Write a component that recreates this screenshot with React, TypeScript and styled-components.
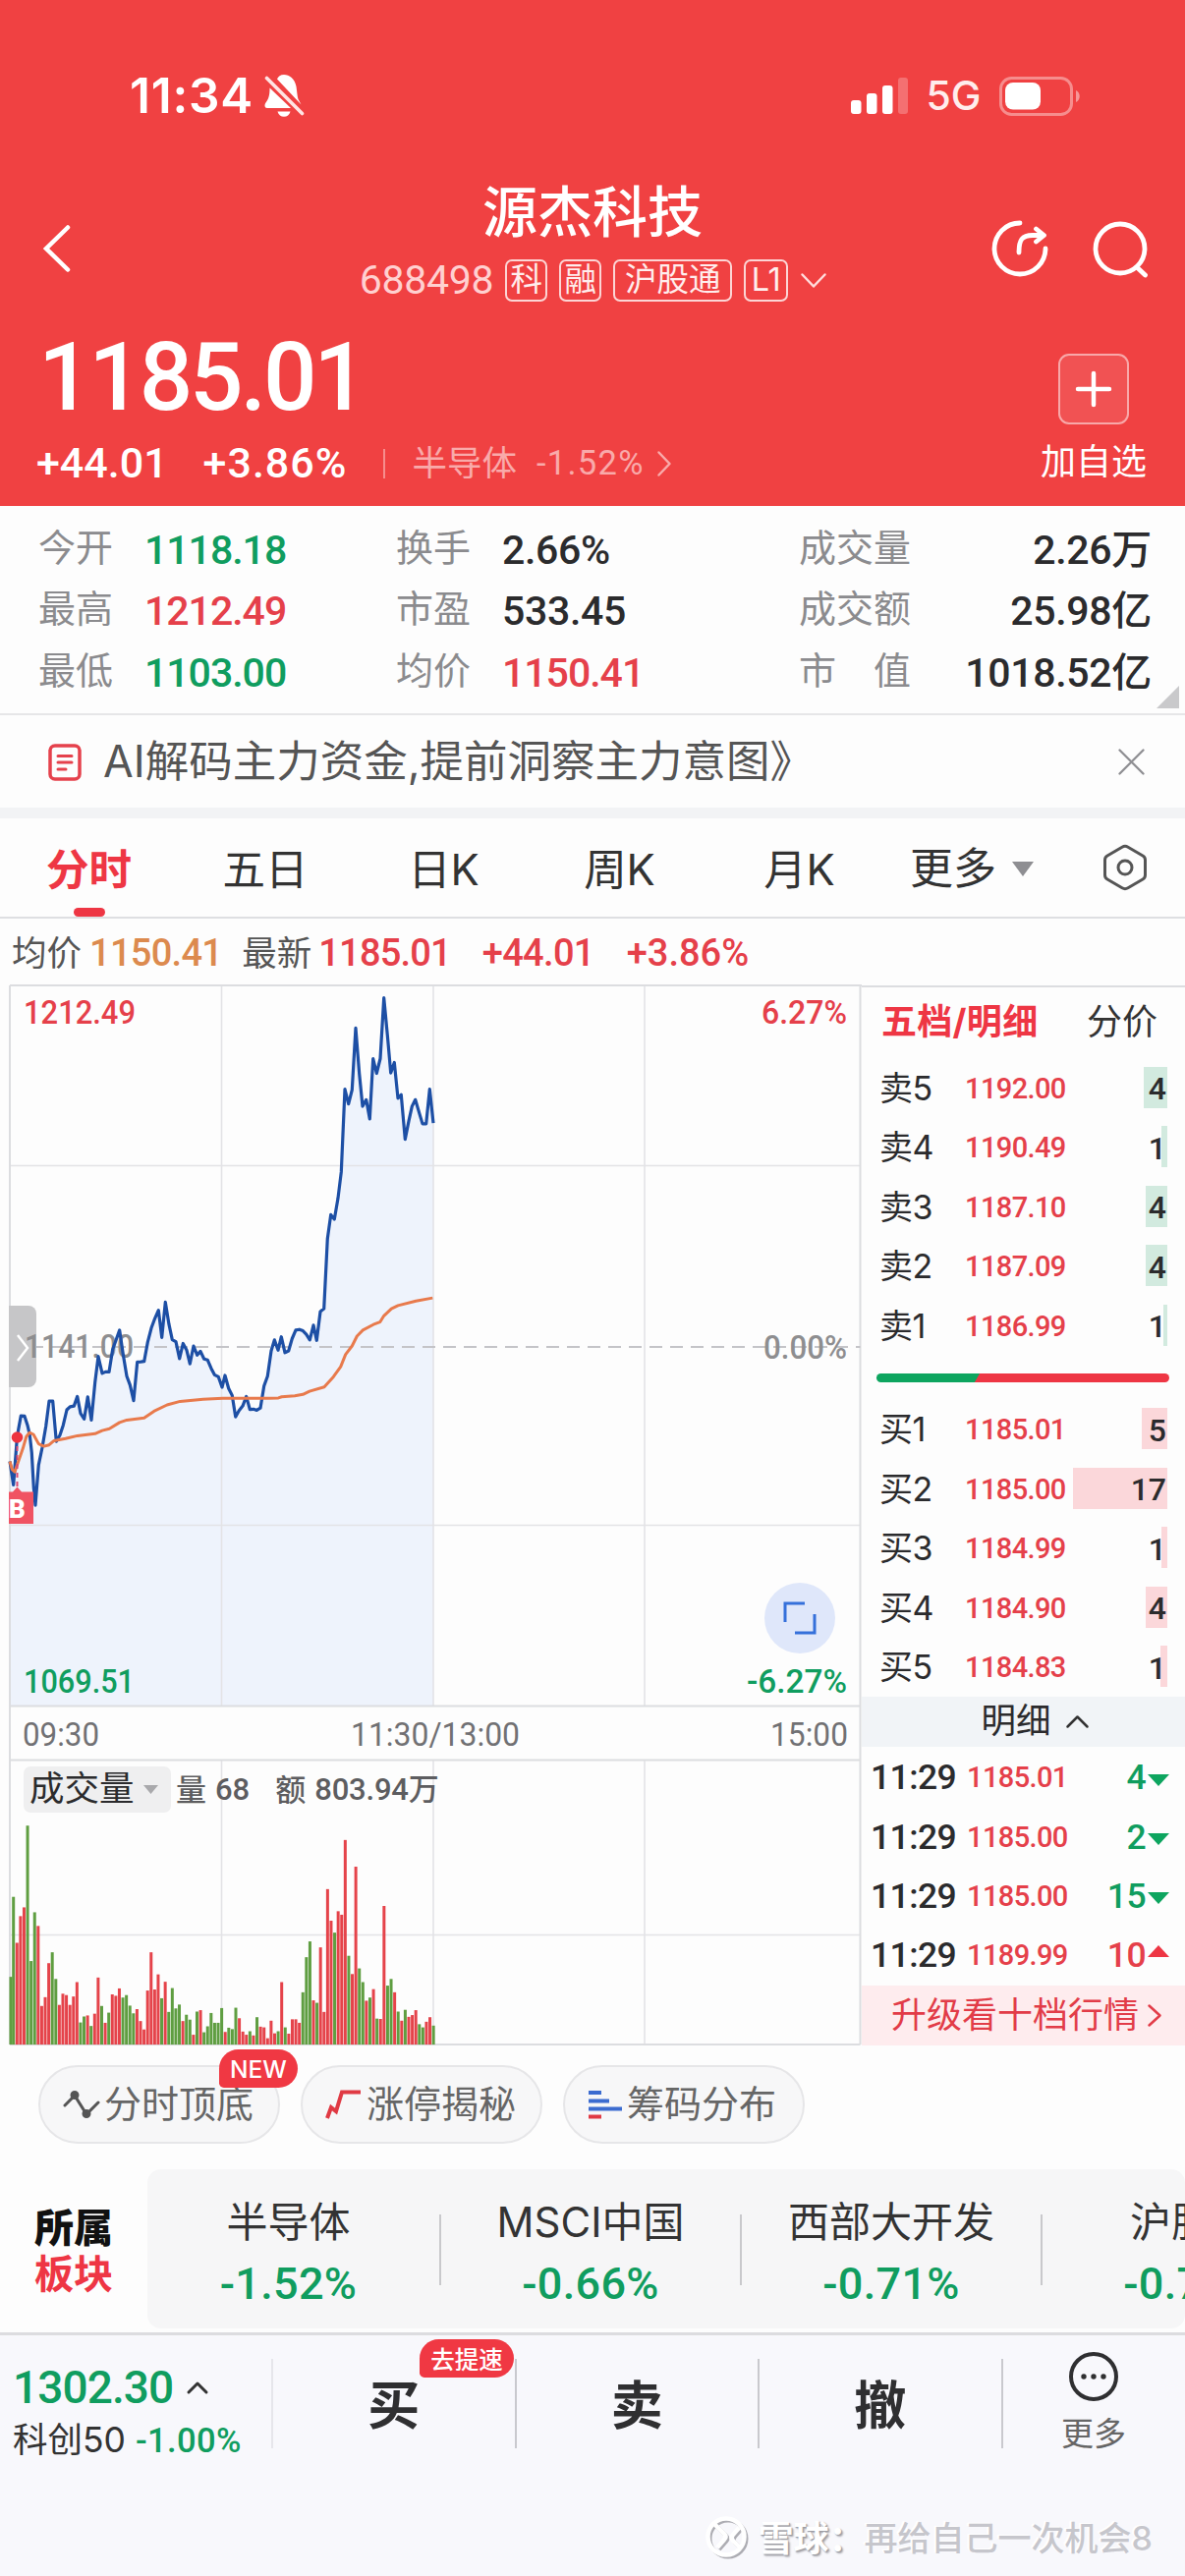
import React from 'react';
import styled, { createGlobalStyle } from 'styled-components';

const RED = '#e5404a';
const GREEN = '#109d5f';
const INK = '#2b2b2d';
const LINE = '#dcdde0';

const CJK = `Inter, 'Noto Sans CJK SC', sans-serif`;
const NUM = `Roboto, 'Noto Sans CJK SC', sans-serif`;

const GlobalStyle = createGlobalStyle`
  * { box-sizing: border-box; }
  body { margin: 0; background: #fdfdfd; font-family: ${CJK}; white-space: nowrap; }
  svg { display: block; flex: none; }
`;

type TextProps = { $size: number; $color?: string; $weight?: number; $ls?: number };

const Text = styled.span<TextProps>`
  font-family: ${CJK};
  font-size: ${p => p.$size}px;
  line-height: 1.2;
  color: ${p => p.$color ?? INK};
  font-weight: ${p => p.$weight ?? 400};
  letter-spacing: ${p => p.$ls ?? 0}px;
`;

const Num = styled(Text)`
  font-family: ${NUM};
  font-weight: ${p => p.$weight ?? 500};
`;

const Page = styled.main`
  width: 1206px;
  height: 2622px;
  display: flex;
  flex-direction: column;
  overflow: hidden;
  background: #fdfdfd;
`;

/* ---------- header ---------- */

const Header = styled.header`
  height: 515px;
  background: #f04142;
  color: #fff;
  padding-top: 73px;
`;

const StatusBar = styled.div`
  height: 50px;
  padding: 0 105px 0 132px;
  display: flex;
  align-items: center;
  justify-content: space-between;
`;

const StatusGroup = styled.div<{ $gap: number }>`
  display: flex;
  align-items: center;
  gap: ${p => p.$gap}px;
`;

const NavBar = styled.nav`
  height: 145px;
  margin-top: 57px;
  display: grid;
  grid-template-columns: 260px 1fr 260px;
  align-items: center;
`;

const NavLeft = styled.div`
  padding-left: 43px;
`;

const NavRight = styled.div`
  display: flex;
  justify-content: flex-end;
  gap: 43px;
  padding-right: 36px;
`;

const NavCenter = styled.div`
  align-self: start;
  display: flex;
  flex-direction: column;
  align-items: center;
`;

const Title = styled.h1`
  margin: 0;
  font-size: 56px;
  line-height: 72px;
  font-weight: 500;
`;

const CodeRow = styled.div`
  height: 43px;
  margin-top: 12px;
  padding-left: 2px;
  display: flex;
  align-items: center;
  gap: 12px;
`;

const Chip = styled.span<{ $width: number }>`
  width: ${p => p.$width}px;
  height: 43px;
  border: 2px solid rgba(255, 255, 255, 0.78);
  border-radius: 7px;
  display: flex;
  align-items: center;
  justify-content: center;
  font-size: 32.5px;
  line-height: 1;
  color: #ffeded;
`;

const Quote = styled.section`
  display: flex;
  justify-content: space-between;
  padding: 11px 40px 0 37px;
`;

const QuoteMain = styled.div`
  display: flex;
  flex-direction: column;
`;

const Price = styled.div`
  font-family: ${NUM};
  font-size: 96px;
  line-height: 96px;
  font-weight: 500;
  letter-spacing: -3.2px;
  padding-left: 2px;
`;

const ChangeRow = styled.div`
  height: 50px;
  margin-top: 15px;
  display: flex;
  align-items: center;
`;

const Gap = styled.i<{ $w: number }>`
  flex: none;
  width: ${p => p.$w}px;
`;

const ThinBar = styled.i`
  width: 2px;
  height: 30px;
  background: rgba(255, 255, 255, 0.4);
`;

const AddBox = styled.div`
  width: 106px;
  display: flex;
  flex-direction: column;
  align-items: center;
  padding-top: 24px;
`;

const AddButton = styled.button`
  width: 72px;
  height: 72px;
  padding: 0;
  border: 2px solid rgba(255, 255, 255, 0.5);
  border-radius: 11px;
  background: rgba(255, 255, 255, 0.09);
  display: flex;
  align-items: center;
  justify-content: center;
  margin-bottom: 17px;
`;

/* ---------- stats ---------- */

const Stats = styled.section`
  height: 213px;
  padding: 14px 34px 0 39px;
  border-bottom: 2px solid #e6e6e8;
  display: grid;
  grid-template-columns: 364px 410px 1fr;
  position: relative;
`;

const StatRow = styled.div<{ $label: number; $end?: boolean }>`
  height: 62.7px;
  display: grid;
  grid-template-columns: ${p => p.$label}px 1fr;
  align-items: center;
  justify-items: ${p => (p.$end ? 'end' : 'start')};
  & > :first-child { justify-self: start; padding-bottom: 6px; }
`;

const Corner = styled.i`
  position: absolute;
  right: 6px;
  bottom: 5px;
  border-style: solid;
  border-width: 0 0 23px 23px;
  border-color: transparent transparent #c9c9cb transparent;
`;

const Notice = styled.section`
  height: 94px;
  padding: 1px 41px 0 49px;
  display: flex;
  align-items: center;
  gap: 22px;
`;

const Grow = styled.div`
  flex: 1;
`;

const Strip = styled.div`
  height: 11px;
  background: #f2f3f5;
`;

/* ---------- tabs ---------- */

const Tabs = styled.nav`
  height: 102px;
  border-bottom: 2px solid #dedfe2;
  padding: 0 38px 0 0;
  display: flex;
`;

const Tab = styled.div<{ $active?: boolean; $w: number }>`
  width: ${p => p.$w}px;
  height: 100px;
  padding-top: 25px;
  display: flex;
  flex-direction: column;
  align-items: center;
  justify-content: space-between;
  font-size: 43.5px;
  line-height: 54px;
  font-weight: ${p => (p.$active ? 700 : 400)};
  color: ${p => (p.$active ? '#ee3644' : '#333')};
  &::after {
    content: '';
    width: 32px;
    height: 9px;
    border-radius: 5px;
    background: ${p => (p.$active ? '#ee3644' : 'transparent')};
  }
`;

const MoreTab = styled.div`
  flex: 1;
  padding: 2px 0 0 16px;
  display: flex;
  align-items: center;
  gap: 16px;
`;

const SettingsTab = styled.div`
  display: flex;
  align-items: center;
`;

const Legend = styled.div`
  height: 68px;
  padding: 4px 0 0 12px;
  display: flex;
  align-items: center;
`;

/* ---------- chart and order book ---------- */

const Board = styled.section`
  height: 1079px;
  display: grid;
  grid-template-columns: 877px 1fr;
`;

const ChartPane = styled.div`
  position: relative;
`;

const IndicatorBar = styled.div`
  position: absolute;
  left: 24px;
  top: 795px;
  height: 47px;
  display: flex;
  align-items: center;
`;

const IndicatorSelect = styled.div`
  width: 150px;
  height: 47px;
  margin-right: 5px;
  padding-left: 6px;
  border-radius: 7px;
  background: #efeff0;
  display: flex;
  align-items: center;
  gap: 9px;
`;

const ExpandButton = styled.button`
  position: absolute;
  left: 778px;
  top: 608px;
  width: 72px;
  height: 72px;
  border: 0;
  padding: 0;
  border-radius: 50%;
  background: #dfe7fa;
  display: flex;
  align-items: center;
  justify-content: center;
`;

const Book = styled.aside`
  border-top: 2px solid ${LINE};
  display: flex;
  flex-direction: column;
`;

const BookTabs = styled.div`
  height: 71.5px;
  padding: 0 28px 0 20px;
  display: flex;
  align-items: center;
  justify-content: space-between;
`;

const LevelRow = styled.div`
  height: 60.5px;
  padding: 0 18px 0 18px;
  display: grid;
  grid-template-columns: 87px 1fr 100px;
  align-items: center;
  & span { padding-top: 3px; }
`;

const Depth = styled.div<{ $w: number; $buy?: boolean }>`
  height: 42px;
  display: flex;
  align-items: center;
  justify-content: flex-end;
  padding-right: 1px;
  background: linear-gradient(${p => (p.$buy ? '#fbd7da, #fbd7da' : '#d2eadf, #d2eadf')}) right / ${p => p.$w}px 100% no-repeat;
`;

const Ratio = styled.div`
  height: 9px;
  margin: 18.5px 16px 17.5px 15px;
  border-radius: 5px;
  background: linear-gradient(120deg, #0da55f 0 34.5%, #ee3644 34.8% 100%);
`;

const DetailBar = styled.div`
  height: 51px;
  margin-bottom: 2px;
  padding-left: 24px;
  background: #f1f4f7;
  display: flex;
  align-items: center;
  justify-content: center;
  gap: 14px;
`;

const TradeRow = styled.div<{ $up: boolean }>`
  height: 60.3px;
  padding: 0 16px 0 9px;
  display: grid;
  grid-template-columns: 98px 1fr auto 24px;
  align-items: center;
  justify-items: start;
  & > svg { justify-self: end; margin: ${p => (p.$up ? '0 0 10px' : '4px 0 0')}; }
`;

const Upgrade = styled.div`
  flex: 1;
  background: #feecee;
  padding-left: 30px;
  display: flex;
  align-items: center;
  gap: 8px;
`;

/* ---------- tools, sectors, bottom bar ---------- */

const Tools = styled.section`
  height: 126px;
  padding: 20px 39px 0;
  display: flex;
  gap: 21px;
`;

const Pill = styled.div`
  position: relative;
  width: 246px;
  height: 80px;
  border: 2px solid #e6e6e8;
  border-radius: 40px;
  background: #f7f7f8;
  display: flex;
  align-items: center;
  padding-left: 23px;
  gap: 4px;
`;

const Badge = styled.span<{ $left: number; $top: number; $w: number }>`
  position: absolute;
  left: ${p => p.$left}px;
  top: ${p => p.$top}px;
  width: ${p => p.$w}px;
  height: 39px;
  border-radius: 20px 20px 20px 5px;
  background: #f03843;
  color: #fff;
  font-size: 24.5px;
  font-weight: 500;
  display: flex;
  align-items: center;
  justify-content: center;
`;

const Sectors = styled.section`
  height: 166px;
  display: flex;
`;

const SectorTitle = styled.div`
  width: 150px;
  padding: 36px 0 0 35px;
  display: flex;
  flex-direction: column;
  font-size: 40px;
  line-height: 47px;
  font-weight: 900;
  color: #111;
  & > em { font-style: normal; color: #ee3644; font-weight: 700; }
`;

const SectorList = styled.div`
  flex: 1;
  height: 162px;
  border-radius: 14px;
  background: #f6f6f7;
  display: flex;
  overflow: hidden;
`;

const Sector = styled.div`
  flex: none;
  width: 306px;
  height: 162px;
  padding: 29px 2px 0 0;
  display: flex;
  flex-direction: column;
  align-items: center;
  gap: 11px;
  background: linear-gradient(#c9c9cc, #c9c9cc) right 46px / 2px 72px no-repeat;
  &:first-child { width: 299px; padding-right: 12px; }
`;

const BottomBar = styled.footer`
  flex: 1;
  border-top: 3px solid #dcdcdf;
  background: #f8f8fc;
  display: flex;
  flex-direction: column;
  justify-content: space-between;
`;

const Actions = styled.div`
  display: flex;
  padding-top: 24px;
`;

const IndexBox = styled.div`
  width: 276px;
  padding: 2px 0 0 13px;
  display: flex;
  flex-direction: column;
  gap: 5px;
`;

const IndexRow = styled.div<{ $gap: number }>`
  display: flex;
  align-items: center;
  gap: ${p => p.$gap}px;
`;

const Action = styled.div<{ $faint?: boolean }>`
  position: relative;
  width: 247.5px;
  height: 91px;
  padding-bottom: 3px;
  border-left: 2px solid ${p => (p.$faint ? '#e6e6eb' : '#c9c9ce')};
  display: flex;
  align-items: center;
  justify-content: center;
  font-size: 53px;
  font-weight: 700;
  color: #2f2f31;
`;

const More = styled.div`
  width: 187px;
  height: 91px;
  border-left: 2px solid #c9c9ce;
  display: flex;
  flex-direction: column;
  align-items: center;
  gap: 14px;
  & > svg { margin-top: -7px; }
`;

const Watermark = styled.div`
  display: flex;
  align-items: center;
  padding: 0 33px 15px 0;
  justify-content: flex-end;
`;

const Brand = styled.span`
  font-size: 36px;
  line-height: 44px;
  font-weight: 700;
  color: #fff;
  margin-left: 8px;
  width: 108px;
  text-shadow: 1px 1px 1px #9c9ca2, 2px 2px 2px #a8a8ae;
`;

const Author = styled.span`
  font-size: 34px;
  line-height: 44px;
  font-weight: 500;
  color: #c6c6cc;
  text-shadow: -2px -1px 1px #fff;
`;

/* ---------- icons ---------- */

const BellOff = () => (
  <svg width="42" height="46" viewBox="0 0 42 46">
    <path d="M14 5.500C15 3 17.500 1 21 1c5.500 0 11 4 12.500 12 .8 5 1 10 2 13l3 5.500z" fill="#fff" />
    <path d="M6.500 14.500C6.500 22 5.500 25.500 2.500 29.500 1 31.500 1 35 4 35h24z" fill="#fff" />
    <path d="M14.500 38.500h13c-.8 3.500-3.500 5.200-6.500 5.200s-5.700-1.700-6.500-5.200z" fill="#fff" />
    <path d="M3.500 4.500l36 36" stroke="#f04142" strokeWidth="7" />
    <path d="M3.500 4.500l36 36" stroke="#ffe4e4" strokeWidth="3.600" strokeLinecap="round" />
  </svg>
);

const Signal = () => (
  <svg width="58" height="40" viewBox="0 0 58 40" fill="#fff">
    <rect x="0" y="24" width="10.500" height="14" rx="3" />
    <rect x="16" y="17" width="10.500" height="21" rx="3" />
    <rect x="32" y="9" width="10.500" height="29" rx="3" />
    <rect x="48" y="1" width="10" height="37" rx="3" opacity="0.250" />
  </svg>
);

const Battery = () => (
  <svg width="84" height="40" viewBox="0 0 84 40">
    <rect x="1.500" y="1.500" width="72" height="37" rx="11" fill="none" stroke="#fff" strokeOpacity="0.400" strokeWidth="3" />
    <rect x="6" y="6" width="36" height="27.500" rx="8" fill="#fff" />
    <path d="M78 14c5 2 5 10 0 12z" fill="#fff" opacity="0.450" />
  </svg>
);

const BackIcon = () => (
  <svg width="30" height="52" viewBox="0 0 30 52" fill="none" stroke="#fff" strokeWidth="4.500" strokeLinecap="round">
    <path d="M26 4.500L4 26l22 21.500" />
  </svg>
);

const ShareIcon = () => (
  <svg width="60" height="60" viewBox="0 0 60 60" fill="none" stroke="#fff" strokeWidth="4.800" strokeLinecap="round" strokeLinejoin="round">
    <path d="M31 4A26 26 0 1 0 57 30" />
    <path d="M30 34c0-13 3-17.500 14-17.500h9M47.500 10l8 6.500-8 6.500" />
  </svg>
);

const SearchIcon = () => (
  <svg width="60" height="60" viewBox="0 0 60 60" fill="none" stroke="#fff" strokeWidth="4.800" strokeLinecap="round">
    <circle cx="30" cy="30" r="25" />
    <path d="M47 49l8.500 8" />
  </svg>
);

const Chevron = ({ w, h, dir, color, stroke = 2.5 }: { w: number; h: number; dir: 'up' | 'down' | 'right'; color: string; stroke?: number }) => {
  const p = stroke;
  const d = {
    up: `M${p} ${h - p}L${w / 2} ${p}L${w - p} ${h - p}`,
    down: `M${p} ${p}L${w / 2} ${h - p}L${w - p} ${p}`,
    right: `M${p} ${p}L${w - p} ${h / 2}L${p} ${h - p}`,
  }[dir];
  return (
    <svg width={w} height={h} fill="none" stroke={color} strokeWidth={stroke} strokeLinecap="round" strokeLinejoin="round">
      <path d={d} />
    </svg>
  );
};

const Caret = ({ w, h, color, up }: { w: number; h: number; color: string; up?: boolean }) => (
  <svg width={w} height={h} fill={color}>
    <path d={up ? `M0 ${h}L${w / 2} 0L${w} ${h}z` : `M0 0L${w / 2} ${h}L${w} 0z`} />
  </svg>
);

const NoticeIcon = () => (
  <svg width="34" height="38" viewBox="0 0 34 38" fill="none" stroke="#e5414c" strokeLinecap="round">
    <rect x="2" y="2" width="30" height="34" rx="5" strokeWidth="3.500" />
    <path d="M10 12.500h14M10 19h14M10 26h8" strokeWidth="3" />
  </svg>
);

const CloseIcon = () => (
  <svg width="27" height="27" viewBox="0 0 27 27" stroke="#8f8f93" strokeWidth="2.300" strokeLinecap="round">
    <path d="M1.500 1.500l24 24M25.500 1.500l-24 24" />
  </svg>
);

const HexIcon = () => (
  <svg width="46" height="48" viewBox="0 0 46 48" fill="none" stroke="#555" strokeWidth="3" strokeLinejoin="round">
    <path d="M20 3.200a6 6 0 0 1 6 0l15 8.800a5 5 0 0 1 2.500 4.300v15.400a5 5 0 0 1-2.500 4.300l-15 8.800a6 6 0 0 1-6 0l-15-8.800a5 5 0 0 1-2.500-4.300V16.300A5 5 0 0 1 5 12z" />
    <circle cx="23" cy="24" r="7" />
  </svg>
);

const ExpandIcon = () => (
  <svg width="34" height="34" viewBox="0 0 34 34" fill="none" stroke="#3570da" strokeWidth="3">
    <path d="M22 2H2v19M12 32h20V13" />
  </svg>
);

const TopBottomIcon = () => (
  <svg width="38" height="32" viewBox="0 0 38 32" stroke="#555" strokeWidth="3" fill="none" strokeLinecap="round">
    <path d="M2 17L12 7l12 19L36 14" />
    <circle cx="12" cy="6.500" r="3" fill="#555" />
    <circle cx="24" cy="25.500" r="3" fill="#555" />
  </svg>
);

const LimitIcon = () => (
  <svg width="38" height="32" viewBox="0 0 38 32" stroke="#e03a44" strokeWidth="4" fill="none">
    <path d="M2 30l4-11 5 4 6-19.500h19" />
  </svg>
);

const ChipsIcon = () => (
  <svg width="36" height="32" viewBox="0 0 36 32" strokeWidth="4">
    <path d="M1 4h13M1 12.500h21M1 20.500h34" stroke="#3c6cd0" />
    <path d="M1 28.500h13" stroke="#e03a44" />
  </svg>
);

const DotsIcon = () => (
  <svg width="50" height="50" viewBox="0 0 50 50">
    <circle cx="25" cy="25" r="23" fill="none" stroke="#2f2f31" strokeWidth="4" />
    <circle cx="15" cy="25" r="2.700" fill="#2f2f31" />
    <circle cx="25" cy="25" r="2.700" fill="#2f2f31" />
    <circle cx="35" cy="25" r="2.700" fill="#2f2f31" />
  </svg>
);

const BrandMark = () => (
  <svg width="46" height="46" viewBox="0 0 46 46" fill="none">
    <g transform="translate(2 2)" stroke="#adadb3" strokeWidth="4">
      <circle cx="21" cy="21" r="18.500" />
      <path d="M9 8l10 10c2 2 2 4 0 6l-7 8M34 12l-6 7c-2 2-2 4 0 6l7 7" />
    </g>
    <g stroke="#fff" strokeWidth="4.500">
      <circle cx="21" cy="21" r="18.500" />
      <path d="M9 8l10 10c2 2 2 4 0 6l-7 8M34 12l-6 7c-2 2-2 4 0 6l7 7" />
    </g>
  </svg>
);

/* ---------- intraday chart ---------- */

const TRACE_X = 3;
const TRACE_Y = 2.8;

const PRICE: number[][] = [
  [30, 1365], [41, 1432], [52, 1300], [57, 1270], [64, 1235], [75, 1236], [84, 1262], [91, 1290], [97, 1340], [103, 1440], [108, 1490],
  [118, 1375], [129, 1325], [140, 1265], [150, 1193], [161, 1193], [172, 1308], [183, 1290], [193, 1262], [204, 1218], [214, 1209],
  [226, 1207], [236, 1180], [246, 1228], [257, 1244], [268, 1181], [279, 1247], [290, 1140], [300, 1066], [312, 1114], [322, 1110],
  [333, 1110], [344, 1045], [354, 1020], [365, 991], [376, 1060], [387, 1122], [397, 1147], [408, 1192], [419, 1082], [430, 1081],
  [440, 1080], [451, 1025], [462, 985], [473, 957], [484, 934], [494, 1012], [505, 911], [516, 975], [526, 1018], [537, 1024],
  [548, 1072], [559, 1029], [570, 1048], [580, 1087], [591, 1036], [602, 1062], [612, 1051], [623, 1073], [634, 1076], [645, 1100],
  [655, 1118], [667, 1124], [678, 1154], [687, 1120], [698, 1157], [709, 1177], [719, 1238], [730, 1220], [741, 1207], [752, 1180],
  [763, 1217], [774, 1216], [784, 1219], [795, 1213], [806, 1150], [817, 1122], [828, 1050], [838, 1019], [849, 1048], [859, 1010],
  [870, 1055], [881, 1050], [892, 1015], [903, 991], [914, 989], [925, 993], [935, 1003], [946, 1019], [957, 977], [967, 1020],
  [978, 938], [989, 930], [1000, 730], [1010, 662], [1021, 675], [1032, 615], [1042, 540], [1053, 304], [1064, 346], [1075, 306],
  [1086, 130], [1097, 260], [1107, 353], [1118, 334], [1129, 389], [1139, 217], [1150, 259], [1161, 217], [1172, 44], [1183, 150],
  [1193, 258], [1204, 228], [1215, 330], [1225, 320], [1237, 447], [1248, 395], [1258, 353], [1268, 334], [1280, 372], [1290, 403],
  [1301, 403], [1312, 304], [1323, 401],
];

const AVERAGE: number[][] = [
  [30, 1365], [37, 1388], [45, 1395], [56, 1365], [70, 1328], [80, 1295], [90, 1283], [102, 1288], [118, 1315], [134, 1322], [150, 1318],
  [165, 1306], [200, 1300], [236, 1292], [290, 1286], [312, 1277], [334, 1272], [365, 1254], [387, 1247], [440, 1241], [470, 1222],
  [510, 1204], [550, 1194], [620, 1188], [680, 1185], [820, 1185], [850, 1184], [860, 1181], [900, 1178], [925, 1174], [945, 1165],
  [990, 1153], [1018, 1124], [1040, 1095], [1055, 1060], [1075, 1036], [1090, 1008], [1108, 991], [1140, 975], [1160, 968],
  [1172, 950], [1195, 930], [1215, 921], [1270, 908], [1321, 899],
];

const VOLUME_BASE = 1515;
const VOLUME =
  'G1322 G1094 R1225 R1149 R1124 G891 G1277 G1138 R1177 R1405 R1380 R1283 G1252 G1328 R1402 R1370 R1374 R1402 R1378 R1337 ' +
  'G1452 G1435 R1432 G1462 R1427 R1324 G1405 R1453 G1424 R1372 R1376 R1355 G1381 G1374 G1404 G1426 R1414 R1448 R1472 R1361 ' +
  'R1252 R1358 R1315 G1383 R1336 G1422 G1354 G1412 G1401 R1448 G1430 G1444 R1487 G1421 R1417 G1480 G1463 G1425 G1453 G1453 ' +
  'G1411 R1479 G1467 G1471 G1410 R1440 R1478 R1487 G1477 R1489 G1437 R1464 R1466 R1497 R1447 R1483 G1477 R1337 G1466 R1484 ' +
  'R1443 R1443 R1453 G1366 G1266 G1221 R1389 G1396 R1238 R1422 R1072 R1162 G1196 R1135 R1145 R932 G1262 R1314 R1008 G1298 ' +
  'G1337 R1390 G1381 R1357 G1441 R1442 R1120 G1347 G1328 R1366 G1421 R1447 G1416 R1436 R1431 R1417 G1457 G1466 R1450 R1437 G1461';

const toPoints = (pts: number[][]) => pts.map(([x, y]) => `${(x / TRACE_X).toFixed(1)},${(y / TRACE_Y).toFixed(1)}`).join(' ');

const AXIS = { left: 10, right: 875.5, top: 3, zero: 371, priceBottom: 736.5, volTop: 791.5, bottom: 1081 };

const ChartSvg = styled.svg`
  margin-top: -2px;
  font-family: ${NUM};
  font-size: 32.5px;
  font-weight: 500;
`;

const AxisText = ({ x, y, w, color, children }: { x: number; y: number; w: number; color: string; children: string }) => (
  <text x={x} y={y} textLength={w} fill={color} lengthAdjust="spacingAndGlyphs">{children}</text>
);

const IntradayChart = () => {
  const line = toPoints(PRICE);
  const area = `${line} 441,${AXIS.priceBottom} ${AXIS.left},${AXIS.priceBottom}`;
  return (
    <ChartSvg width="877" height="1081" viewBox="0 1 877 1081">
      <polygon points={area} fill="#eef3fc" />
      <g stroke="#e3e3e6" strokeWidth="1.600">
        <path d={`M${AXIS.left} 186.500H${AXIS.right}M${AXIS.left} 552.500H${AXIS.right}M${AXIS.left} 969.500H${AXIS.right}`} />
        {[225.5, 441, 656].map(x => (
          <path key={x} d={`M${x} ${AXIS.top}V${AXIS.priceBottom}M${x} ${AXIS.volTop}V${AXIS.bottom}`} />
        ))}
      </g>
      <g stroke={LINE} strokeWidth="2">
        <path d={`M${AXIS.left} ${AXIS.top}H877M${AXIS.left} ${AXIS.priceBottom}H${AXIS.right}M${AXIS.left} ${AXIS.volTop}H${AXIS.right}M${AXIS.left} ${AXIS.bottom}H${AXIS.right}`} />
        <path d={`M${AXIS.left} ${AXIS.top}V${AXIS.bottom}M${AXIS.right} ${AXIS.top}V${AXIS.bottom}`} />
      </g>
      <path d={`M${AXIS.left} ${AXIS.zero}H${AXIS.right}`} stroke="#c4c4c8" strokeWidth="1.800" strokeDasharray="13 8" />

      {VOLUME.split(' ').map((bar, i) => {
        const top = Number(bar.slice(1));
        const x = AXIS.left + i * 3.592 - (i === 0 ? 0.5 : 1.4);
        return (
          <rect
            key={i}
            x={x}
            y={540 + top / TRACE_Y}
            width="3"
            height={(VOLUME_BASE - top) / TRACE_Y}
            fill={bar[0] === 'R' ? '#e5434a' : '#5f9e41'}
          />
        );
      })}

      <path d="M9 329h20a8 8 0 0 1 8 8v67a8 8 0 0 1-8 8H9z" fill="#c6c6c8" />
      <path d="M18 359l10 13-10 13" fill="none" stroke="#fff" strokeWidth="2.500" />
      <AxisText x={25} y={382} w={111} color="#8e8e90">1141.00</AxisText>

      <polyline points={line} fill="none" stroke="#1d4fa5" strokeWidth="3.200" strokeLinejoin="round" />
      <polyline points={toPoints(AVERAGE)} fill="none" stroke="#e87a4c" strokeWidth="3" strokeLinejoin="round" />

      <path d="M17.500 463v52" stroke="#d94a70" strokeWidth="2" strokeDasharray="5 4" />
      <circle cx="17.500" cy="463" r="5.800" fill="#ee3440" />
      <path d="M9 518.500h4l4.500-5 4.500 5h12V551H9z" fill="#f05363" />
      <text x="9" y="544.500" fill="#fff" fontSize="26" fontWeight="900">B</text>

      <AxisText x={24} y={41.5} w={114} color={RED}>1212.49</AxisText>
      <AxisText x={775} y={41.5} w={87} color={RED}>6.27%</AxisText>
      <AxisText x={777} y={382.5} w={85} color="#8e8e90">0.00%</AxisText>
      <AxisText x={24} y={722.5} w={113} color={GREEN}>1069.51</AxisText>
      <AxisText x={760} y={722.5} w={102} color={GREEN}>-6.27%</AxisText>
      <g fontWeight="400">
        <AxisText x={23} y={777} w={78} color="#717174">09:30</AxisText>
        <AxisText x={357} y={777} w={172} color="#717174">11:30/13:00</AxisText>
        <AxisText x={784} y={777} w={79} color="#717174">15:00</AxisText>
      </g>
    </ChartSvg>
  );
};

/* ---------- data ---------- */

const STATS = [
  [
    { label: '今开', value: '1118.18', color: GREEN },
    { label: '最高', value: '1212.49', color: RED },
    { label: '最低', value: '1103.00', color: GREEN },
  ],
  [
    { label: '换手', value: '2.66%', color: INK },
    { label: '市盈', value: '533.45', color: INK },
    { label: '均价', value: '1150.41', color: RED },
  ],
  [
    { label: '成交量', value: '2.26万', color: INK },
    { label: '成交额', value: '25.98亿', color: INK },
    { label: '市\u3000值', value: '1018.52亿', color: INK },
  ],
];

const SELL = [
  ['卖5', '1192.00', '4', 24],
  ['卖4', '1190.49', '1', 6],
  ['卖3', '1187.10', '4', 22],
  ['卖2', '1187.09', '4', 22],
  ['卖1', '1186.99', '1', 4],
] as const;

const BUY = [
  ['买1', '1185.01', '5', 26],
  ['买2', '1185.00', '17', 96],
  ['买3', '1184.99', '1', 6],
  ['买4', '1184.90', '4', 22],
  ['买5', '1184.83', '1', 7],
] as const;

const TRADES = [
  { price: '1185.01', qty: '4', up: false },
  { price: '1185.00', qty: '2', up: false },
  { price: '1185.00', qty: '15', up: false },
  { price: '1189.99', qty: '10', up: true },
];

const SECTORS = [
  ['半导体', '-1.52%'],
  ['MSCI中国', '-0.66%'],
  ['西部大开发', '-0.71%'],
  ['沪股通', '-0.71%'],
];

const Levels = ({ rows, buy }: { rows: readonly (readonly [string, string, string, number])[]; buy?: boolean }) => (
  <>
    {rows.map(([name, price, qty, w]) => (
      <LevelRow key={name}>
        <Text $size={34} $ls={-0.5}>{name}</Text>
        <Num $size={29} $color={RED} $ls={-0.6}>{price}</Num>
        <Depth $w={w} $buy={buy}>
          <Num $size={32}>{qty}</Num>
        </Depth>
      </LevelRow>
    ))}
  </>
);

export default function App() {
  return (
    <Page>
      <GlobalStyle />
      <Header>
        <StatusBar>
          <StatusGroup $gap={10}>
            <Text $size={49.5} $weight={600} $color="#fff" $ls={0.8}>11:34</Text>
            <BellOff />
          </StatusGroup>
          <StatusGroup $gap={19}>
            <Signal />
            <Text $size={41} $weight={500} $color="#ffeded" $ls={-0.3}>5G</Text>
            <Battery />
          </StatusGroup>
        </StatusBar>
        <NavBar>
          <NavLeft><BackIcon /></NavLeft>
          <NavCenter>
            <Title>源杰科技</Title>
            <CodeRow>
              <Num $size={41} $weight={400} $color="#ffd0d0" $ls={-0.3}>688498</Num>
              <Chip $width={43}>科</Chip>
              <Chip $width={43}>融</Chip>
              <Chip $width={121}>沪股通</Chip>
              <Chip $width={45}>L1</Chip>
              <Chevron w={28} h={17} dir="down" color="#ffdcdc" />
            </CodeRow>
          </NavCenter>
          <NavRight>
            <ShareIcon />
            <SearchIcon />
          </NavRight>
        </NavBar>
        <Quote>
          <QuoteMain>
            <Price>1185.01</Price>
            <ChangeRow>
              <Num $size={43} $color="#fff">+44.01</Num>
              <Gap $w={36} />
              <Num $size={43} $color="#fff" $ls={1}>+3.86%</Num>
              <Gap $w={37} />
              <ThinBar />
              <Gap $w={27} />
              <Text $size={35.5} $color="#f9aaaa">半导体</Text>
              <Gap $w={20} />
              <Num $size={34.5} $color="#f9aaaa" $weight={400} $ls={1.3}>-1.52%</Num>
              <Gap $w={12} />
              <Chevron w={16} h={28} dir="right" color="#f9aaaa" />
            </ChangeRow>
          </QuoteMain>
          <AddBox>
            <AddButton aria-label="加自选">
              <svg width="38" height="38" stroke="#fff" strokeWidth="4.500" strokeLinecap="round">
                <path d="M19 3v32M3 19h32" />
              </svg>
            </AddButton>
            <Text $size={36} $color="#fff">加自选</Text>
          </AddBox>
        </Quote>
      </Header>

      <Stats>
        {STATS.map((col, c) => (
          <div key={c}>
            {col.map(s => (
              <StatRow key={s.label} $label={c === 2 ? 130 : 108} $end={c === 2}>
                <Text $size={38} $color="#8b8b8e">{s.label}</Text>
                <Num $size={41} $color={s.color} $ls={s.value.length === 7 && c < 2 ? -1 : -0.3}>{s.value}</Num>
              </StatRow>
            ))}
          </div>
        ))}
        <Corner />
      </Stats>

      <Notice>
        <NoticeIcon />
        <Grow><Text $size={44.5} $color="#555">AI解码主力资金,提前洞察主力意图》</Text></Grow>
        <CloseIcon />
      </Notice>
      <Strip />

      <Tabs>
        <Tab $w={181} $active>分时</Tab>
        <Tab $w={178}>五日</Tab>
        <Tab $w={185}>日K</Tab>
        <Tab $w={173}>周K</Tab>
        <Tab $w={193}>月K</Tab>
        <MoreTab>
          <Text $size={44} $color="#333">更多</Text>
          <Caret w={22} h={15} color="#8e8e92" />
        </MoreTab>
        <SettingsTab><HexIcon /></SettingsTab>
      </Tabs>

      <Legend>
        <Text $size={35.5} $color="#555">均价</Text>
        <Gap $w={8} />
        <Num $size={38} $color="#dc8a4e" $ls={-0.7}>1150.41</Num>
        <Gap $w={20} />
        <Text $size={35.5} $color="#555">最新</Text>
        <Gap $w={7} />
        <Num $size={38} $color={RED} $ls={-0.8}>1185.01</Num>
        <Gap $w={32} />
        <Num $size={38} $color={RED} $ls={-0.7}>+44.01</Num>
        <Gap $w={33} />
        <Num $size={38} $color={RED} $ls={0}>+3.86%</Num>
      </Legend>

      <Board>
        <ChartPane>
          <IntradayChart />
          <IndicatorBar>
            <IndicatorSelect>
              <Text $size={35.5}>成交量</Text>
              <Caret w={15} h={9} color="#a9a9ac" />
            </IndicatorSelect>
            <Text $size={31} $color="#5d5d60" $weight={500}>量</Text>
            <Gap $w={9} />
            <Num $size={31} $color="#5d5d60">68</Num>
            <Gap $w={26} />
            <Text $size={31} $color="#5d5d60" $weight={500}>额</Text>
            <Gap $w={9} />
            <Num $size={31} $color="#5d5d60" $ls={-0.2}>803.94万</Num>
          </IndicatorBar>
          <ExpandButton aria-label="展开"><ExpandIcon /></ExpandButton>
        </ChartPane>

        <Book>
          <BookTabs>
            <Text $size={36} $weight={700} $color="#ee3644" $ls={0.3}>五档/明细</Text>
            <Text $size={36} $color="#333">分价</Text>
          </BookTabs>
          <Levels rows={SELL} />
          <Ratio />
          <Levels rows={BUY} buy />
          <DetailBar>
            <Text $size={35.5}>明细</Text>
            <Chevron w={25} h={15} dir="up" color="#333" />
          </DetailBar>
          {TRADES.map((t, i) => (
            <TradeRow key={i} $up={t.up}>
              <Num $size={35.5} $ls={-0.6}>11:29</Num>
              <Num $size={29} $color={RED} $ls={-0.6}>{t.price}</Num>
              <Num $size={35.5} $color={t.up ? RED : GREEN} $ls={-0.6}>{t.qty}</Num>
              <Caret w={22} h={12} up={t.up} color={t.up ? '#ee3644' : '#0da55f'} />
            </TradeRow>
          ))}
          <Upgrade>
            <Text $size={36} $color="#e23c48">升级看十档行情</Text>
            <Chevron w={16} h={25} dir="right" color="#e23c48" />
          </Upgrade>
        </Book>
      </Board>

      <Tools>
        <Pill>
          <TopBottomIcon />
          <Text $size={38} $color="#666">分时顶底</Text>
          <Badge $left={182} $top={-18} $w={80}>NEW</Badge>
        </Pill>
        <Pill>
          <LimitIcon />
          <Text $size={38} $color="#666">涨停揭秘</Text>
        </Pill>
        <Pill>
          <ChipsIcon />
          <Text $size={38} $color="#666">筹码分布</Text>
        </Pill>
      </Tools>

      <Sectors>
        <SectorTitle>所属<em>板块</em></SectorTitle>
        <SectorList>
          {SECTORS.map(([name, pct]) => (
            <Sector key={name}>
              <Text $size={42} $color="#333">{name}</Text>
              <Num $size={45} $color={GREEN} $ls={0.3}>{pct}</Num>
            </Sector>
          ))}
        </SectorList>
      </Sectors>

      <BottomBar>
        <Actions>
          <IndexBox>
            <IndexRow $gap={13}>
              <Num $size={46} $color={GREEN} $ls={-0.9}>1302.30</Num>
              <Chevron w={24} h={15} dir="up" color="#333" stroke={3} />
            </IndexRow>
            <IndexRow $gap={10}>
              <Text $size={35.5} $color="#333">科创50</Text>
              <Num $size={34.5} $color={GREEN} $ls={0.4}>-1.00%</Num>
            </IndexRow>
          </IndexBox>
          <Action $faint>
            买
            <Badge $left={149} $top={-20} $w={96}>去提速</Badge>
          </Action>
          <Action>卖</Action>
          <Action>撤</Action>
          <More>
            <DotsIcon />
            <Text $size={33} $color="#666">更多</Text>
          </More>
        </Actions>
        <Watermark>
          <BrandMark />
          <Brand>雪球：</Brand>
          <Author>再给自己一次机会8</Author>
        </Watermark>
      </BottomBar>
    </Page>
  );
}
